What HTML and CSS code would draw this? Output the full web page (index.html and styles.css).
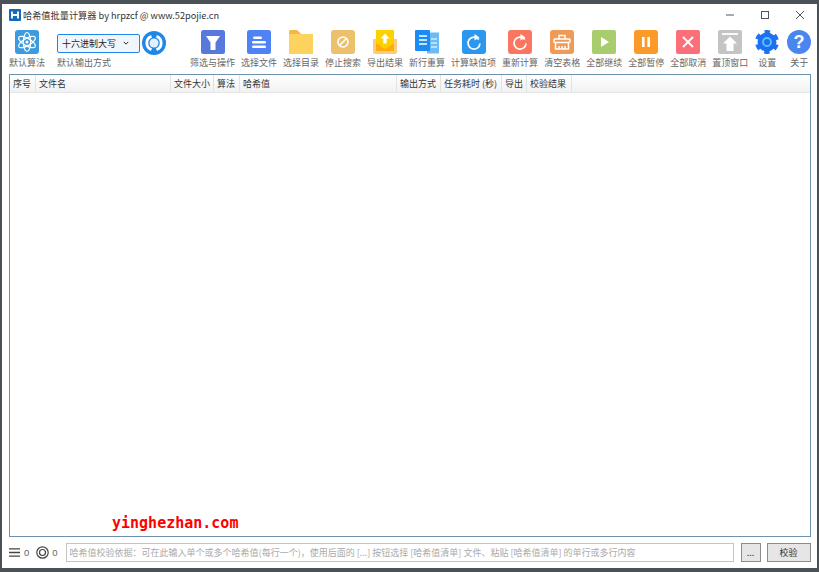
FILE: index.html
```html
<!DOCTYPE html>
<html lang="zh">
<head>
<meta charset="utf-8">
<title>哈希值批量计算器</title>
<link rel="stylesheet" href="styles.css">
</head>
<body>
<div class="window">
  <header class="titlebar">
    <svg class="app-icon" viewBox="0 0 12 12"><rect width="12" height="12" rx="1" fill="#1668b8"/><path d="M3 2.500v7M9 2.500v7M3 6h6" stroke="#fff" stroke-width="1.800" fill="none"/></svg>
    <span class="title">哈希值批量计算器 by hrpzcf @ www.52pojie.cn</span>
    <div class="win-controls">
      <svg viewBox="0 0 10 10"><path d="M1 5h8" stroke="#555" fill="none"/></svg>
      <svg viewBox="0 0 10 10"><rect x="1.500" y="1.500" width="7" height="7" stroke="#555" fill="none"/></svg>
      <svg viewBox="0 0 10 10"><path d="M1 1l8 8M9 1l-8 8" stroke="#555" fill="none"/></svg>
    </div>
  </header>

  <div class="toolbar">
    <div class="tool tool-algo">
      <svg class="ico" viewBox="0 0 24 24"><rect width="24" height="24" rx="3" fill="#3b9ae0"/><g fill="none" stroke="#fff" stroke-width="1.200"><ellipse cx="12" cy="12" rx="9.500" ry="3.600" transform="rotate(30 12 12)"/><ellipse cx="12" cy="12" rx="9.500" ry="3.600" transform="rotate(-30 12 12)"/><ellipse cx="12" cy="12" rx="9.500" ry="3.600" transform="rotate(90 12 12)"/></g><circle cx="12" cy="12" r="1.500" fill="#fff"/></svg>
      <span class="lbl">默认算法</span>
    </div>
    <div class="tool tool-output">
      <div class="output-row">
        <div class="combo"><span>十六进制大写</span><svg class="chev" viewBox="0 0 8 5"><path d="M1 1l3 3 3-3" stroke="#222" stroke-width="1.300" fill="none"/></svg></div>
        <svg class="spin" viewBox="0 0 24 24"><circle cx="12" cy="12" r="12" fill="#1f87e8"/><circle cx="12" cy="12" r="4.500" fill="#e4f0fc"/><path d="M9.500 5.400A7 7 0 0 0 9.500 18.600M14.500 5.400A7 7 0 0 1 14.500 18.600" stroke="#fff" stroke-width="2.800" fill="none"/></svg>
      </div>
      <span class="lbl">默认输出方式</span>
    </div>
    <div class="tools">
      <div class="tool">
        <svg class="ico" viewBox="0 0 24 24"><rect width="24" height="24" rx="2.500" fill="#5779dd"/><path d="M5 6h14l-4.500 6.500V20h-5v-7.500z" fill="#fff"/></svg>
        <span class="lbl">筛选与操作</span>
      </div>
      <div class="tool">
        <svg class="ico" viewBox="0 0 24 24"><rect width="24" height="24" rx="2.500" fill="#4f83f5"/><g fill="#fff"><rect x="6" y="6.500" width="9" height="2.600" rx="1.300"/><rect x="5" y="11" width="14" height="2.600" rx="1.300"/><rect x="5" y="15.500" width="14" height="2.600" rx="1.300"/></g></svg>
        <span class="lbl">选择文件</span>
      </div>
      <div class="tool">
        <svg class="ico" viewBox="0 0 24 24"><path d="M0 2a2 2 0 0 1 2-2h6l4 4h12v20H0z" fill="#fdd35e"/><path d="M0 2a2 2 0 0 1 2-2h6l4 4H0z" fill="#f7b64c"/></svg>
        <span class="lbl">选择目录</span>
      </div>
      <div class="tool">
        <svg class="ico" viewBox="0 0 24 24"><rect width="24" height="24" rx="3" fill="#ecc06d"/><circle cx="12" cy="12" r="5" fill="none" stroke="#fff" stroke-width="1.600"/><path d="M8.500 15.500l7-7" stroke="#fff" stroke-width="1.600"/></svg>
        <span class="lbl">停止搜索</span>
      </div>
      <div class="tool">
        <svg class="ico" viewBox="0 0 24 24"><path d="M0 9h24v13a2 2 0 0 1-2 2H2a2 2 0 0 1-2-2z" fill="#fbcb80"/><rect x="3" y="0" width="18" height="21" rx="1" fill="#fdd000"/><path d="M3 13l9 6 9-6v8H3z" fill="#fdae0c"/><path d="M12 3.500l4.500 5h-2.800v5h-3.400v-5H7.500z" fill="#fff"/></svg>
        <span class="lbl">导出结果</span>
      </div>
      <div class="tool">
        <svg class="ico" viewBox="0 0 24 24"><rect x="12" y="2.500" width="12" height="21" fill="#6bbcf5"/><rect width="15" height="21" rx="1" fill="#1b8cf3"/><g stroke="#fff" stroke-width="1.400"><path d="M4 6h8M4 10h8M4 14h8"/><path d="M16 9h6M16 13h6M16 17h6" stroke="#d2ebfb"/></g></svg>
        <span class="lbl">新行重算</span>
      </div>
      <div class="tool">
        <svg class="ico" viewBox="0 0 24 24"><rect width="24" height="24" rx="3" fill="#2b97ee"/><path d="M16.800 9.500A6 6 0 1 0 18 13.500" fill="none" stroke="#fff" stroke-width="1.700"/><path d="M12.500 4l5 3.600-5 2.900z" fill="#fff"/></svg>
        <span class="lbl">计算缺值项</span>
      </div>
      <div class="tool">
        <svg class="ico" viewBox="0 0 24 24"><rect width="24" height="24" rx="3" fill="#fa7660"/><path d="M16.800 9.500A6 6 0 1 0 18 13.500" fill="none" stroke="#fff" stroke-width="1.700"/><path d="M12.500 4l5 3.600-5 2.900z" fill="#fff"/></svg>
        <span class="lbl">重新计算</span>
      </div>
      <div class="tool">
        <svg class="ico" viewBox="0 0 24 24"><rect width="24" height="24" rx="3" fill="#f09a55"/><g fill="none" stroke="#fff" stroke-width="1.500"><path d="M9 9V5.500h6V9"/><rect x="4" y="9" width="16" height="3.500" rx="1"/><path d="M5.500 12.500V19h13v-6.500M9 16v3M12 16v3M15 16v3"/></g></svg>
        <span class="lbl">清空表格</span>
      </div>
      <div class="tool">
        <svg class="ico" viewBox="0 0 24 24"><rect width="24" height="24" rx="2" fill="#a9cd6d"/><path d="M9 7l8 5-8 5z" fill="#fff"/></svg>
        <span class="lbl">全部继续</span>
      </div>
      <div class="tool">
        <svg class="ico" viewBox="0 0 24 24"><rect width="24" height="24" rx="3" fill="#fb9a29"/><g fill="#fff"><rect x="8" y="7" width="2.600" height="10"/><rect x="13.400" y="7" width="2.600" height="10"/></g></svg>
        <span class="lbl">全部暂停</span>
      </div>
      <div class="tool">
        <svg class="ico" viewBox="0 0 24 24"><rect width="24" height="24" rx="2" fill="#fa6f78"/><path d="M7 7l10 10M17 7L7 17" stroke="#fff" stroke-width="1.800"/></svg>
        <span class="lbl">全部取消</span>
      </div>
      <div class="tool">
        <svg class="ico" viewBox="0 0 24 24"><rect width="24" height="24" rx="2" fill="#c4c4c4"/><path d="M4 4h16" stroke="#fff" stroke-width="1.800"/><path d="M12 6.500l7 7h-3.500V21h-7v-7.500H5z" fill="#fff"/></svg>
        <span class="lbl">置顶窗口</span>
      </div>
      <div class="tool tool-narrow">
        <svg class="ico" viewBox="0 0 24 24"><circle cx="12" cy="12" r="9.500" fill="#1f6ff0"/><circle cx="12" cy="12" r="10.500" fill="none" stroke="#1f6ff0" stroke-width="3" stroke-dasharray="5.500 5.500" transform="rotate(15 12 12)"/><circle cx="12" cy="12" r="4" fill="none" stroke="#58c6f5" stroke-width="1.800"/></svg>
        <span class="lbl">设置</span>
      </div>
      <div class="tool tool-narrow">
        <svg class="ico" viewBox="0 0 24 24"><circle cx="12" cy="12" r="12" fill="#4a86f0"/><text class="q" x="12" y="18" text-anchor="middle">?</text></svg>
        <span class="lbl">关于</span>
      </div>
    </div>
  </div>

  <main class="table">
    <div class="thead">
      <div class="th w-no">序号</div>
      <div class="th w-name">文件名</div>
      <div class="th w-size">文件大小</div>
      <div class="th w-algo">算法</div>
      <div class="th w-hash">哈希值</div>
      <div class="th w-out">输出方式</div>
      <div class="th w-time">任务耗时 (秒)</div>
      <div class="th w-exp">导出</div>
      <div class="th w-check">校验结果</div>
      <div class="th-rest"></div>
    </div>
    <div class="watermark">yinghezhan.com</div>
  </main>

  <footer class="footer">
    <svg class="fi" viewBox="0 0 12 12"><path d="M0 2h12M0 6h12M0 10h12" stroke="#444" stroke-width="1.500"/></svg>
    <span class="count">0</span>
    <svg class="fi fi-target" viewBox="0 0 13 13"><circle cx="6.500" cy="6.500" r="5.700" fill="none" stroke="#444" stroke-width="1.200"/><circle cx="6.500" cy="6.500" r="3" fill="none" stroke="#444" stroke-width="1.200"/></svg>
    <span class="count count-2">0</span>
    <div class="input">哈希值校验依据：可在此输入单个或多个哈希值(每行一个)，使用后面的 [...] 按钮选择 [哈希值清单] 文件、粘贴 [哈希值清单] 的单行或多行内容</div>
    <div class="btn btn-more">...</div>
    <div class="btn btn-check">校验</div>
  </footer>
</div>
</body>
</html>
```
FILE: styles.css
```css
* { box-sizing: border-box; }
html, body { margin: 0; height: 100%; overflow: hidden; }
body {
  background: #4a5258;
  padding: 4px 2px 4px 2px;
  font-family: "Noto Sans CJK SC", "Liberation Sans", sans-serif;
  font-size: 9px;
  color: #555;
}
.window {
  height: 100%;
  background: #fff;
  display: flex;
  flex-direction: column;
  padding: 0 6px 0 7px;
}
.titlebar {
  height: 21px;
  display: flex;
  align-items: center;
  flex: none;
}
.app-icon { width: 12px; height: 12px; margin-right: 2px; }
.title { font-size: 9.2px; color: #333; }
.win-controls {
  margin-left: auto;
  margin-right: 6px;
  display: flex;
  gap: 25px;
}
.win-controls svg { width: 10px; height: 10px; display: block; }

.toolbar {
  height: 49px;
  flex: none;
  display: flex;
  padding-top: 5px;
}
.tool {
  display: flex;
  flex-direction: column;
  align-items: center;
  flex: none;
}
.ico { width: 24px; height: 24px; display: block; margin-bottom: 2px; }
.lbl { font-size: 9px; line-height: 14px; color: #666; white-space: nowrap; }
.tool-algo { width: 36px; }
.tool-output { margin-left: 12px; align-items: flex-start; width: 110px; }
.output-row { display: flex; align-items: center; height: 26px; }
.combo {
  width: 83px;
  height: 19px;
  border: 1.5px solid #1f87e8;
  border-radius: 2px;
  background: #f0f6fb;
  display: flex;
  align-items: center;
  padding: 0 5px 0 4px;
  font-size: 9px;
  color: #222;
}
.chev { width: 6px; height: 4px; margin-left: auto; margin-right: 5px; }
.spin { width: 24px; height: 24px; margin-left: 2px; }
.tools { display: flex; gap: 6px; margin-left: 23px; }
.tool-narrow { width: 26px; }
.q { font: 700 18px "Liberation Sans", sans-serif; fill: #fff; }

.table {
  flex: 1;
  min-height: 0;
  border: 1px solid #6d93ac;
  position: relative;
}
.thead {
  height: 18px;
  display: flex;
  background: linear-gradient(#fff, #f0f1f2);
  border-bottom: 1px solid #e6e6e6;
}
.th {
  flex: none;
  line-height: 17px;
  padding-left: 3px;
  color: #333;
  white-space: nowrap;
  border-right: 1px solid #e2e2e2;
  overflow: hidden;
}
.th-rest { flex: 1; }
.w-no { width: 26px; }
.w-name { width: 135px; }
.w-size { width: 43px; }
.w-algo { width: 26px; }
.w-hash { width: 157px; }
.w-out { width: 44px; }
.w-time { width: 61px; }
.w-exp { width: 25px; }
.w-check { width: 45px; }
.watermark {
  position: absolute;
  left: 102px;
  bottom: 4px;
  font: 700 15px "DejaVu Sans Mono", monospace;
  line-height: 18px;
  color: #f00;
}

.footer {
  flex: none;
  height: 31px;
  display: flex;
  align-items: center;
  padding-bottom: 1px;
}
.fi { width: 11px; height: 11px; flex: none; }
.fi-target { width: 13px; height: 13px; margin-left: 7px; }
.count { margin-left: 4px; font: 9.5px "Liberation Sans", sans-serif; color: #666; }
.count-2 { margin-left: 3px; }
.input {
  width: 668px;
  height: 19px;
  margin-left: 8px;
  border: 1px solid #c4c4c4;
  padding-left: 3px;
  line-height: 17px;
  color: #aaa;
  white-space: nowrap;
  overflow: hidden;
}
.btn {
  height: 19px;
  border: 1px solid #8c8c8c;
  background: #e6e6e6;
  color: #333;
  text-align: center;
  line-height: 17px;
  flex: none;
}
.btn-more { width: 20px; margin-left: 7px; }
.btn-check { width: 44px; margin-left: 6px; }
```
